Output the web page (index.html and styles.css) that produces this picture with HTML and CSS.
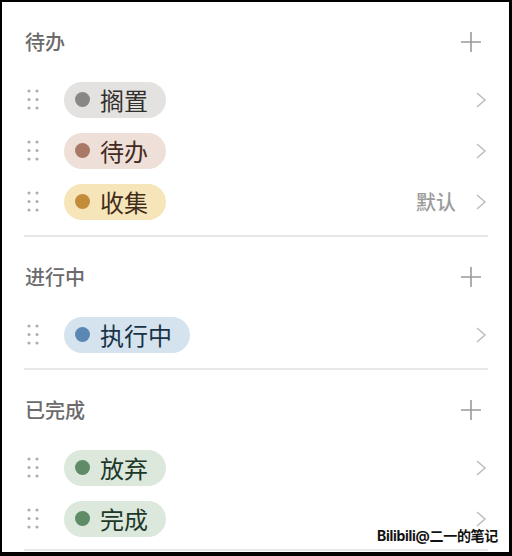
FILE: index.html
```html
<!DOCTYPE html>
<html lang="zh-CN">
<head>
  <meta charset="UTF-8" />
  <meta name="viewport" content="width=device-width, initial-scale=1.0"/>
  <title>状态</title>
  <link rel="stylesheet" href="styles.css">
</head>
<body>

  <div class="marco">

    <section class="grupo">
      <div class="grupo-header">
        <h2>待办</h2>
        <svg class="mas" viewBox="0 0 22 22"><path d="M11 1v20M1 11h20"/></svg>
      </div>
      <div class="fila">
        <svg class="asa" viewBox="0 0 12 21"><circle cx="2" cy="2" r="1.6"/><circle cx="10" cy="2" r="1.6"/><circle cx="2" cy="10.5" r="1.6"/><circle cx="10" cy="10.5" r="1.6"/><circle cx="2" cy="19" r="1.6"/><circle cx="10" cy="19" r="1.6"/></svg>
        <span class="tag gris"><i></i>搁置</span>
        <svg class="flecha" viewBox="0 0 12 18"><path d="M2 2l8 7-8 7"/></svg>
      </div>
      <div class="fila">
        <svg class="asa" viewBox="0 0 12 21"><circle cx="2" cy="2" r="1.6"/><circle cx="10" cy="2" r="1.6"/><circle cx="2" cy="10.5" r="1.6"/><circle cx="10" cy="10.5" r="1.6"/><circle cx="2" cy="19" r="1.6"/><circle cx="10" cy="19" r="1.6"/></svg>
        <span class="tag marron"><i></i>待办</span>
        <svg class="flecha" viewBox="0 0 12 18"><path d="M2 2l8 7-8 7"/></svg>
      </div>
      <div class="fila">
        <svg class="asa" viewBox="0 0 12 21"><circle cx="2" cy="2" r="1.6"/><circle cx="10" cy="2" r="1.6"/><circle cx="2" cy="10.5" r="1.6"/><circle cx="10" cy="10.5" r="1.6"/><circle cx="2" cy="19" r="1.6"/><circle cx="10" cy="19" r="1.6"/></svg>
        <span class="tag amarillo"><i></i>收集</span>
        <span class="defecto">默认</span>
        <svg class="flecha" viewBox="0 0 12 18"><path d="M2 2l8 7-8 7"/></svg>
      </div>
    </section>

    <section class="grupo">
      <div class="grupo-header">
        <h2>进行中</h2>
        <svg class="mas" viewBox="0 0 22 22"><path d="M11 1v20M1 11h20"/></svg>
      </div>
      <div class="fila">
        <svg class="asa" viewBox="0 0 12 21"><circle cx="2" cy="2" r="1.6"/><circle cx="10" cy="2" r="1.6"/><circle cx="2" cy="10.5" r="1.6"/><circle cx="10" cy="10.5" r="1.6"/><circle cx="2" cy="19" r="1.6"/><circle cx="10" cy="19" r="1.6"/></svg>
        <span class="tag azul"><i></i>执行中</span>
        <svg class="flecha" viewBox="0 0 12 18"><path d="M2 2l8 7-8 7"/></svg>
      </div>
    </section>

    <section class="grupo ultimo">
      <div class="grupo-header">
        <h2>已完成</h2>
        <svg class="mas" viewBox="0 0 22 22"><path d="M11 1v20M1 11h20"/></svg>
      </div>
      <div class="fila">
        <svg class="asa" viewBox="0 0 12 21"><circle cx="2" cy="2" r="1.6"/><circle cx="10" cy="2" r="1.6"/><circle cx="2" cy="10.5" r="1.6"/><circle cx="10" cy="10.5" r="1.6"/><circle cx="2" cy="19" r="1.6"/><circle cx="10" cy="19" r="1.6"/></svg>
        <span class="tag verde"><i></i>放弃</span>
        <svg class="flecha" viewBox="0 0 12 18"><path d="M2 2l8 7-8 7"/></svg>
      </div>
      <div class="fila">
        <svg class="asa" viewBox="0 0 12 21"><circle cx="2" cy="2" r="1.6"/><circle cx="10" cy="2" r="1.6"/><circle cx="2" cy="10.5" r="1.6"/><circle cx="10" cy="10.5" r="1.6"/><circle cx="2" cy="19" r="1.6"/><circle cx="10" cy="19" r="1.6"/></svg>
        <span class="tag verde"><i></i>完成</span>
        <svg class="flecha" viewBox="0 0 12 18"><path d="M2 2l8 7-8 7"/></svg>
      </div>
      <div class="firma">Bilibili@二一的笔记</div>
    </section>

  </div>

</body>
</html>
```

FILE: styles.css
```css
/* ===== Base ===== */
* { margin:0; padding:0; box-sizing:border-box; }
html, body {
  width:512px; height:556px; overflow:hidden;
  font-family: "Noto Sans CJK SC", "Noto Sans", sans-serif;
  background:#000;
}

/* ===== Marco ===== */
.marco {
  width:512px; height:556px;
  background:#fff;
  border-style:solid; border-color:#000;
  border-width:2px 3px 4px 2px;
  padding:0 21px 0 22px;
  overflow:hidden;
}

/* ===== Grupos ===== */
.grupo { padding:28px 0 8px; border-bottom:2px solid #e8e8e8; }
.grupo.ultimo { padding-bottom:5px; position:relative; }

.grupo-header {
  display:flex; justify-content:space-between; align-items:center;
  height:24px; margin-bottom:20px;
}
.grupo-header h2 {
  font-size:20px; font-weight:500; color:#6b6b6b;
  line-height:24px; padding-left:1px;
}
.mas {
  width:22px; height:22px; margin-right:6px;
  fill:none; stroke:#9a9a9a; stroke-width:1.6;
}

/* ===== Filas ===== */
.fila {
  display:flex; align-items:center; height:51px;
}
.asa {
  width:12px; height:21px; margin:0 25px 0 3px;
  fill:#b0b0b0;
}
.tag {
  display:inline-flex; align-items:center;
  height:36px; border-radius:18px;
  padding:0 18px 0 11px;
  font-size:24px; line-height:36px;
}
.tag i {
  width:15px; height:15px; border-radius:50%;
  margin-right:10px;
}
.gris { background:#e3e2e0; color:#32302c; }
.gris i { background:#888785; }
.marron { background:#eedfd8; color:#442a1e; }
.marron i { background:#a87a66; }
.amarillo { background:#f6e5b8; color:#402c1b; }
.amarillo i { background:#c38c3b; }
.azul { background:#d5e3ef; color:#183347; }
.azul i { background:#5b88b3; }
.verde { background:#dce8dc; color:#1c3829; }
.verde i { background:#5f8b67; }

.defecto {
  margin-left:auto; margin-right:19px;
  font-size:20px; color:#9b9b9b; font-weight:500;
}
.flecha {
  width:12px; height:18px; margin-left:auto; margin-right:1px;
  fill:none; stroke:#bdbdbd; stroke-width:1.5;
}
.defecto + .flecha { margin-left:0; }

/* ===== Firma ===== */
.firma {
  position:absolute; right:-10px; bottom:4px;
  font-size:14px; font-weight:700; color:#111;
  font-family: "Inter", "Noto Sans CJK SC", sans-serif;
  letter-spacing:-0.3px;
  padding-left:2px;
}
```
